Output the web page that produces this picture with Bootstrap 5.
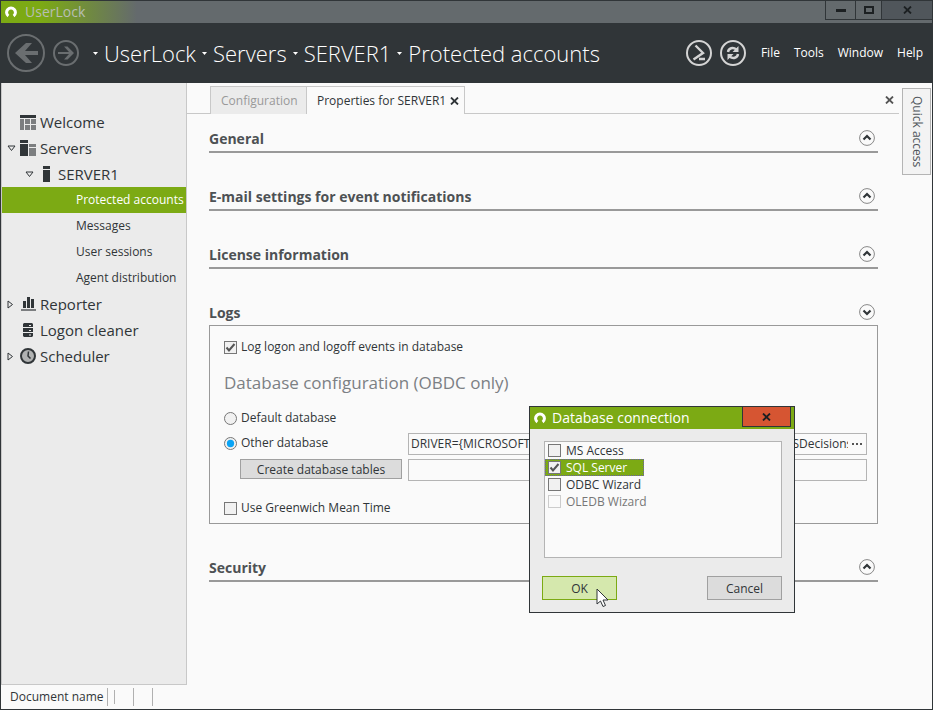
<!DOCTYPE html>
<html lang="en">
<head>
<meta charset="utf-8">
<meta name="viewport" content="width=device-width, initial-scale=1">
<title>UserLock</title>
<link href="https://cdn.jsdelivr.net/npm/bootstrap@5.3.0/dist/css/bootstrap.min.css" rel="stylesheet">
<style>
:root{--dark:#303538;--green:#7caa14;--pane:#ebebeb;--paper:#fafafa;--line:#c8c8c8;--rule:#999}
body{font-family:"Open Sans","Noto Sans",sans-serif;font-size:12px;line-height:20px;color:#303538;background:var(--paper);border:1px solid var(--dark)}
svg{display:block;flex:none}
button{font:inherit;color:inherit}
a{color:inherit;text-decoration:none}
.title-bar{height:22px;background:linear-gradient(90deg,var(--green) 40px,#646a6d 136px);color:#b8beb4;font-size:14px;line-height:22px}
.win-btns button{height:19px;border:1px solid var(--dark);border-top:0;border-right:0;background:none;padding:0;display:flex;align-items:center;justify-content:center}
.win-min{width:30px}.win-max{width:26px}
.win-btns .win-close{width:51px;background:#50565b}
.app-head{height:60px;background:var(--dark);color:#fff;padding-left:6px}
.icon-btn{border:0;background:none;padding:0}
.crumbs{font-size:22px;font-weight:300;line-height:30px;gap:6px;margin-left:14px}
.head-tools{margin-right:15px}
.menus{gap:14px;margin-right:9px}
.side{width:186px;background:var(--pane);border:1px solid var(--line);border-top:0;padding-top:26px}
.side a{height:26px;font-size:15px;gap:4px}
.side a.leaf{font-size:12px;padding-left:74px}
.side a.on{background:var(--green);color:#fff}
.side .twist{width:9px}
.side a.node{padding-left:5px}
.side a.sub{padding-left:23px}
.ico{width:16px;display:flex;justify-content:center}
.tabs{height:31px;padding:3px 0 0 23px;border-bottom:1px solid var(--line)}
.tabs button{border:1px solid var(--line);border-bottom:0;height:28px;padding:0 10px;line-height:20px}
.tabs .tab-off{background:var(--pane);color:#999;width:96px;border-right:0}
.tab-item{background:var(--paper);width:159px;height:28px;border:1px solid var(--line);border-bottom:0;padding:0 5px 0 10px}
.tabs .tab-label,.tabs .tab-close{border:0;height:auto;padding:0;background:none}
.tabs .tab-all{padding:0 5px;color:#555}
.quick{width:33px;padding:5px 1px 0 3px}
.quick button{width:29px;height:87px;border:1px solid #b4b4b4;background:#f3f3f3;writing-mode:vertical-rl;color:#50565b;padding:0;line-height:24px}
.sections{padding:13px 21px 0 22px;max-width:1100px}
.sec{margin-bottom:32px}
.sec-head{height:26px;border-bottom:2px solid var(--rule);padding:0 3px 2px 0}
.sec-head.open{height:24px;border:0}
.sec-head h2{font-size:14px;line-height:24px;font-weight:700;color:#4d5154;margin:0}
.panel-box{border:1px solid var(--rule);padding:11px 10px 5px 14px}
.opt{gap:4px;height:20px}
.opt .form-check-input,.pick .form-check-input{width:13px;height:13px;margin:0;border:1px solid #777;background-color:#f1f1f1;flex:none}
.form-check-input[type=checkbox]{border-radius:0}
.form-check-input:checked[type=checkbox]{background-image:url("data:image/svg+xml,%3csvg xmlns='http://www.w3.org/2000/svg' viewBox='0 0 11 11'%3e%3cpath d='M1.500 5.500 L4 8.500 L9.500 2' fill='none' stroke='%23555' stroke-width='2'/%3e%3c/svg%3e")}
.form-check-input:checked[type=radio]{background-image:url("data:image/svg+xml,%3csvg xmlns='http://www.w3.org/2000/svg' viewBox='0 0 13 13'%3e%3ccircle cx='6.5' cy='6.5' r='4.3' fill='%2309a3f5'/%3e%3c/svg%3e")}
.db-title{font-size:17px;line-height:26px;margin:13px 0 12px;color:#7c8084;font-weight:400}
.db-grid{display:grid;grid-template-columns:178px 1fr;column-gap:6px;row-gap:4px;margin:5px 0 17px}
.flat-btn{border:1px solid #a0a0a0;background:#dcdcdc;padding:2px 0 0;line-height:16px}
.create{margin:0 0 2px 16px}
.field{height:22px;border:1px solid #b4b4b4;background:var(--paper)}
.field input{border:0;background:none;font:inherit;color:inherit;padding:0 0 0 2px;outline:0;min-width:0}
.status{height:24px;padding-left:9px}
.status i{border-left:1px solid #b0b0b0;height:18px;margin-right:18px}
.status i.first{margin:0 6px 0 3px}
.status i.short{height:14px}
.dlg{position:absolute;left:528px;top:405px;width:266px;background:var(--pane);border:1px solid var(--dark)}
.dlg-title{height:22px;background:var(--green);color:#fff;padding-left:4px;gap:6px}
.dlg-title h1{font-size:14px;font-weight:400;line-height:22px;margin:0}
.dlg-title button{width:49px;height:20px;background:#d65532;border:1px solid var(--dark);border-top:0;margin:0 3px 0 auto;padding:0}
.picks{border:1px solid #b4b4b4;background:var(--paper);margin:12px 12px 18px 14px;height:117px}
.pick{height:17px;gap:5px;padding-left:3px;line-height:17px;width:99px}
.pick.on{background:var(--green);color:#fff;outline:1px dotted #6a5ab0;outline-offset:-1px}
.pick .form-check-input:disabled{border-color:#ccc;background-color:var(--paper);opacity:1}
.pick .form-check-input:disabled~label{color:#777;opacity:1}
.dlg-btns{padding:0 12px 12px}
.dlg-btns button{width:75px;height:24px}
.dlg-btns .ok{background:#d5e8ad;border-color:var(--green)}
.pointer{position:absolute;left:66px;top:181px}
</style>
</head>
<body class="min-vh-100 d-flex flex-column position-relative">
<svg width="0" height="0" class="position-absolute">
  <symbol id="logo" viewBox="0 0 12 12"><path d="M3.400 10A4.400 4.400 0 1 1 8.600 10" fill="none" stroke="#fff" stroke-width="3"/></symbol>
  <symbol id="cross" viewBox="0 0 9 8"><path d="M1 .5 8 7.500M8 .5 1 7.500" fill="none" stroke="currentColor" stroke-width="1.800"/></symbol>
  <symbol id="caret" viewBox="0 0 5 3"><path d="M0 0H5L2.500 3Z" fill="#fff"/></symbol>
  <symbol id="up" viewBox="0 0 16 16"><circle cx="8" cy="8" r="7.400" fill="none" stroke="#888"/><path d="M4.500 9.500 8 6 11.500 9.500" fill="none" stroke="#303538" stroke-width="2.200"/></symbol>
  <symbol id="down" viewBox="0 0 16 16"><circle cx="8" cy="8" r="7.400" fill="none" stroke="#888"/><path d="M4.500 6.500 8 10 11.500 6.500" fill="none" stroke="#303538" stroke-width="2.200"/></symbol>
</svg>

<div class="title-bar d-flex">
  <div class="d-flex align-items-center ps-1 gap-1 flex-grow-1"><svg width="12" height="12"><use href="#logo"/></svg><span class="ps-1">UserLock</span></div>
  <div class="win-btns d-flex">
    <button class="win-min" aria-label="Minimize"><svg width="10" height="3"><path d="M0 0H10V3H0Z" fill="#1c2022"/></svg></button>
    <button class="win-max" aria-label="Maximize"><svg width="10" height="8"><path d="M1 1H9V7H1Z" fill="none" stroke="#1c2022" stroke-width="2"/></svg></button>
    <button class="win-close" aria-label="Close"><svg width="9" height="8" color="#1c2022"><use href="#cross"/></svg></button>
  </div>
</div>

<header class="app-head d-flex align-items-center">
  <button class="icon-btn" aria-label="Back"><svg width="38" height="38"><circle cx="19" cy="19" r="18" fill="none" stroke="#6a6e70" stroke-width="2"/><path d="M31 17H18L25 9H19L8 19 19 29H25L18 21H31Z" fill="#6a6e70"/></svg></button>
  <button class="icon-btn ms-1 ps-1" aria-label="Forward"><svg width="26" height="26"><circle cx="13" cy="13" r="12" fill="none" stroke="#6a6e70" stroke-width="2"/><path d="M5 12H16L11 6.500H14.500L21 13 14.500 19.500H11L16 14H5Z" fill="#6a6e70"/></svg></button>
  <nav class="crumbs d-flex align-items-center flex-grow-1 text-nowrap" aria-label="Breadcrumb">
    <svg width="5" height="3"><use href="#caret"/></svg><a href="#">UserLock</a>
    <svg width="5" height="3"><use href="#caret"/></svg><a href="#">Servers</a>
    <svg width="5" height="3"><use href="#caret"/></svg><a href="#">SERVER1</a>
    <svg width="5" height="3"><use href="#caret"/></svg><a href="#">Protected accounts</a>
  </nav>
  <div class="head-tools d-flex gap-2">
    <button class="icon-btn" aria-label="PowerShell"><svg width="26" height="26" fill="none" stroke="#d4d4d4" stroke-width="2"><circle cx="13" cy="13" r="12"/><path d="M9.500 5.500 17 13 7.500 19.500M13 19H19" stroke-width="2.400"/></svg></button>
    <button class="icon-btn" aria-label="Refresh"><svg width="26" height="26" fill="none" stroke="#d4d4d4" stroke-width="2"><circle cx="13" cy="13" r="12"/><path d="M8 12C8.500 8 13 6.800 16.500 9.500M18 14C17.500 18 13 19.200 9.500 16.500" stroke-width="2.400"/><path d="M18.500 6V12H12.500ZM7.500 20V14H13.500Z" fill="#d4d4d4" stroke="none"/></svg></button>
  </div>
  <nav class="menus d-flex"><a href="#">File</a><a href="#">Tools</a><a href="#">Window</a><a href="#">Help</a></nav>
</header>

<main class="d-flex flex-grow-1">
  <nav class="side flex-shrink-0" aria-label="Console tree">
    <a href="#" class="node d-flex align-items-center"><span class="twist"></span><span class="ico"><svg width="16" height="15"><path d="M0 0H16V3H0Z" fill="#303538"/><path d="M0 4H4V15H0ZM5 4H10V9H5ZM11 4H16V9H11ZM5 10H10V15H5ZM11 10H16V15H11Z" fill="#7c7e80"/></svg></span>Welcome</a>
    <a href="#" class="node d-flex align-items-center"><span class="twist"><svg width="9" height="7"><path d="M1 1H8L4.500 5.500Z" fill="none" stroke="#303538"/></svg></span><span class="ico"><svg width="16" height="16"><path d="M0 0H8V3H0ZM0 4H8V16H0Z" fill="#303538"/><path d="M9 4H16V7H9ZM9 8H16V16H9Z" fill="#7c7e80"/></svg></span>Servers</a>
    <a href="#" class="sub d-flex align-items-center"><span class="twist"><svg width="9" height="7"><path d="M1 1H8L4.500 5.500Z" fill="none" stroke="#303538"/></svg></span><span class="ico"><svg width="7" height="16"><path d="M0 0H7V3H0ZM0 4H7V16H0Z" fill="#303538"/></svg></span>SERVER1</a>
    <a href="#" class="leaf on d-flex align-items-center">Protected accounts</a>
    <a href="#" class="leaf d-flex align-items-center">Messages</a>
    <a href="#" class="leaf d-flex align-items-center">User sessions</a>
    <a href="#" class="leaf d-flex align-items-center">Agent distribution</a>
    <a href="#" class="node d-flex align-items-center"><span class="twist"><svg width="7" height="9"><path d="M1 1V8L5.500 4.500Z" fill="none" stroke="#303538"/></svg></span><span class="ico"><svg width="15" height="14"><path d="M2 4H5V11H2ZM6 0H9V11H6ZM10 2H13V11H10Z" fill="#303538"/><path d="M0 12H15V14H0Z" fill="#7c7e80"/></svg></span>Reporter</a>
    <a href="#" class="node d-flex align-items-center"><span class="twist"></span><span class="ico"><svg width="10" height="14"><path d="M1 0H9L10 1V4H0V1ZM0 5H10V9H0ZM0 10H10V13L9 14H1L0 13Z" fill="#303538"/><path d="M6 2.500H8M6 7.500H8M6 12H8" stroke="#ebebeb"/></svg></span>Logon cleaner</a>
    <a href="#" class="node d-flex align-items-center"><span class="twist"><svg width="7" height="9"><path d="M1 1V8L5.500 4.500Z" fill="none" stroke="#303538"/></svg></span><span class="ico"><svg width="16" height="16"><circle cx="8" cy="8" r="7" fill="#b0b2b2" stroke="#303538" stroke-width="2"/><path d="M8.500 3.500 8 8 10.500 10.500" fill="none" stroke="#303538" stroke-width="1.500"/></svg></span>Scheduler</a>
  </nav>

  <div class="flex-grow-1">
    <div class="tabs d-flex">
      <button class="tab-off text-nowrap">Configuration</button>
      <div class="tab-item d-flex align-items-center justify-content-between text-nowrap"><button class="tab-label">Properties for SERVER1</button><button class="tab-close" aria-label="Close tab"><svg width="9" height="8"><use href="#cross"/></svg></button></div>
      <button class="tab-close tab-all ms-auto" aria-label="Close all"><svg width="9" height="8"><use href="#cross"/></svg></button>
    </div>
    <div class="sections">
      <section class="sec"><div class="sec-head d-flex justify-content-between"><h2>General</h2><button class="icon-btn align-self-center" aria-label="Expand General"><svg width="16" height="16"><use href="#up"/></svg></button></div></section>
      <section class="sec"><div class="sec-head d-flex justify-content-between"><h2>E-mail settings for event notifications</h2><button class="icon-btn align-self-center" aria-label="Expand e-mail settings"><svg width="16" height="16"><use href="#up"/></svg></button></div></section>
      <section class="sec"><div class="sec-head d-flex justify-content-between"><h2>License information</h2><button class="icon-btn align-self-center" aria-label="Expand License"><svg width="16" height="16"><use href="#up"/></svg></button></div></section>
      <section class="sec">
        <div class="sec-head open d-flex justify-content-between"><h2>Logs</h2><button class="icon-btn align-self-center" aria-label="Collapse Logs"><svg width="16" height="16"><use href="#down"/></svg></button></div>
        <div class="panel-box">
          <div class="opt d-flex align-items-center"><input class="form-check-input" type="checkbox" id="logev" checked><label for="logev">Log logon and logoff events in database</label></div>
          <h3 class="db-title">Database configuration (OBDC only)</h3>
          <div class="opt d-flex align-items-center"><input class="form-check-input" type="radio" name="db" id="dbdef"><label for="dbdef">Default database</label></div>
          <div class="db-grid">
            <div class="opt d-flex align-items-center"><input class="form-check-input" type="radio" name="db" id="dboth" checked><label for="dboth">Other database</label></div>
            <div class="field d-flex"><input class="flex-grow-1" type="text" aria-label="Connection string" value="DRIVER={MICROSOFT ACCESS DRIVER (*mdb)};DB=C:\Program Files\ISDecisions\UserLock"><button class="icon-btn px-1" aria-label="Browse"><svg width="10" height="2"><path d="M0 0H2V2H0ZM4 0H6V2H4ZM8 0H10V2H8Z" fill="#555"/></svg></button></div>
            <button class="flat-btn create">Create database tables</button>
            <div class="field d-flex"><input class="flex-grow-1" type="text" aria-label="Connection options"></div>
          </div>
          <div class="opt d-flex align-items-center"><input class="form-check-input" type="checkbox" id="gmt"><label for="gmt">Use Greenwich Mean Time</label></div>
        </div>
      </section>
      <section><div class="sec-head d-flex justify-content-between"><h2>Security</h2><button class="icon-btn align-self-center" aria-label="Expand Security"><svg width="16" height="16"><use href="#up"/></svg></button></div></section>
    </div>
  </div>
  <aside class="quick flex-shrink-0"><button>Quick access</button></aside>
</main>

<footer class="status d-flex align-items-center">Document name<i class="first"></i><i class="short"></i><i></i><i></i></footer>

<div class="dlg" role="dialog" aria-labelledby="dlgt">
  <div class="dlg-title d-flex"><svg width="12" height="12" class="align-self-center"><use href="#logo"/></svg><h1 id="dlgt">Database connection</h1><button class="d-flex align-items-center justify-content-center" aria-label="Close dialog"><svg width="9" height="8" color="#1c2022"><use href="#cross"/></svg></button></div>
  <div class="picks">
    <div class="pick d-flex align-items-center"><input class="form-check-input" type="checkbox" id="p1"><label for="p1">MS Access</label></div>
    <div class="pick on d-flex align-items-center"><input class="form-check-input" type="checkbox" id="p2" checked><label for="p2">SQL Server</label></div>
    <div class="pick d-flex align-items-center"><input class="form-check-input" type="checkbox" id="p3"><label for="p3">ODBC Wizard</label></div>
    <div class="pick d-flex align-items-center text-nowrap"><input class="form-check-input" type="checkbox" id="p4" disabled><label for="p4">OLEDB Wizard</label></div>
  </div>
  <div class="dlg-btns d-flex justify-content-between"><button class="flat-btn ok">OK</button><button class="flat-btn">Cancel</button></div>
  <svg class="pointer" width="13" height="20"><path d="M1 1V16L4.500 13 7 18.500 9.500 17.500 7 12H12Z" fill="#fff" stroke="#303538"/></svg>
</div>
<script src="https://cdn.jsdelivr.net/npm/bootstrap@5.3.0/dist/js/bootstrap.bundle.min.js"></script>
</body>
</html>
